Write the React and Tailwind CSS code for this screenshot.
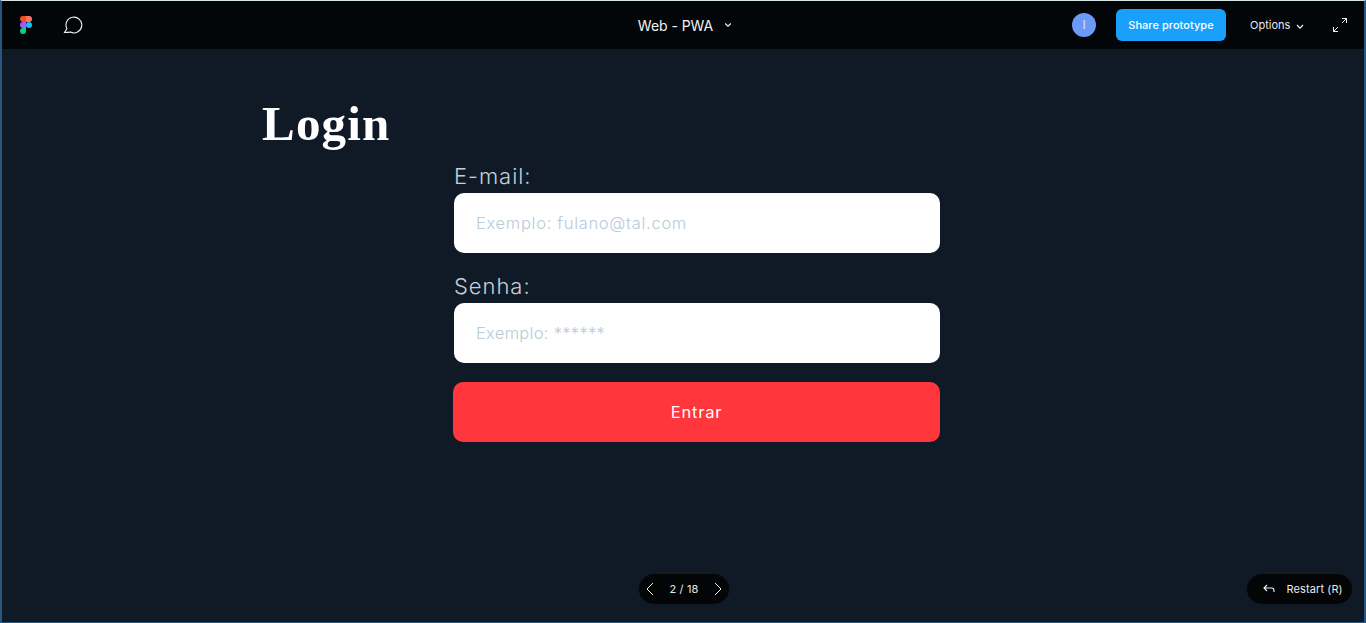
import React from "react";

function FigmaLogo() {
  return (
    <svg width="12" height="18" viewBox="0 0 12 18" className="block">
      <path d="M3 0h3v6H3a3 3 0 0 1 0-6Z" fill="#f24e1e" />
      <path d="M6 0h3a3 3 0 0 1 0 6H6Z" fill="#ff7262" />
      <path d="M3 6h3v6H3a3 3 0 0 1 0-6Z" fill="#a259ff" />
      <circle cx="9" cy="9" r="3" fill="#1abcfe" />
      <path d="M3 12h3v3a3 3 0 1 1-3-3Z" fill="#0acf83" />
    </svg>
  );
}

function Stroke({ w, h, d, sw = 1, color = "#f2f2f2" }) {
  return (
    <svg width={w} height={h} viewBox={`0 0 ${w} ${h}`} fill="none" stroke={color} strokeWidth={sw} className="block shrink-0">
      <path d={d} />
    </svg>
  );
}

function Field({ label, type, placeholder, spacing }) {
  return (
    <label className="block h-[110px]">
      <span className="block h-[34px] font-['Inter',sans-serif] text-[22px] leading-[34px] font-light tracking-[0.95px] text-[#c3d0dc]">
        {label}
      </span>
      <input
        type={type}
        placeholder={placeholder}
        className={`block h-[60px] w-[486px] rounded-[10px] bg-white px-[22px] font-['Inter',sans-serif] text-[16.5px] font-light text-[#101a26] placeholder:text-[#b9cad8] placeholder:opacity-100 ${spacing}`}
      />
    </label>
  );
}

export default function App() {
  return (
    <div className="flex h-[623px] w-[1366px] flex-col overflow-hidden border-x-2 border-t border-b border-x-[#28567e] border-t-[#d5e3e3] border-b-[#28567e] bg-[#101a26] font-['Inter',sans-serif] text-white">
      <header className="grid h-12 shrink-0 grid-cols-3 items-center bg-[#020608]">
        <div className="flex items-center gap-[31px] pl-[18px]">
          <FigmaLogo />
          <Stroke w={20} h={18} d="M1.5 16.5 3.9 12.7A7.9 7.9 0 1 1 7.4 16.1Q4.5 16.2 1.5 16.5Z" sw={1.1} />
        </div>
        <div className="flex items-center justify-center gap-[11px] pl-[4px]">
          <span className="pt-0.5 text-[14px] leading-5 tracking-[-0.05px] text-[#f2f2f2]">Web - PWA</span>
          <Stroke w={8} h={6} d="M1.2 1.5 4 4.2 6.8 1.5" sw={1.2} />
        </div>
        <div className="flex items-center justify-end pr-4">
          <span className="flex h-6 w-6 items-center justify-center rounded-full bg-[#6b9af8] text-[12px] text-[#d8e4ff]">I</span>
          <button className="ml-5 h-8 w-[110px] rounded-[6px] bg-[#18a0fb] text-[11px] font-medium tracking-[0.05px]">Share prototype</button>
          <span className="ml-6 w-[41px] text-[11px] text-[#e8e8e8]">Options</span>
          <span className="ml-[5px] mt-[3px]">
            <Stroke w={8} h={6} d="M1 1 4 4.2 7 1" sw={1.2} />
          </span>
          <span className="ml-7">
            <Stroke w={16} h={16} d="M10 1.5h4.5V6M14.5 1.5 10 6M1.5 10v4.5H6M1.5 14.5l4.5-4.5" />
          </span>
        </div>
      </header>

      <main className="flex-1">
        <h1 className="h-[110px] pt-[46px] pl-[260px] font-['Liberation_Serif',serif] text-[49px] leading-[58px] font-bold tracking-[1.2px]">Login</h1>
        <form className="ml-[451px] w-[487px]">
          <div className="pl-px">
            <Field label="E-mail:" type="text" placeholder="Exemplo: fulano@tal.com" spacing="tracking-[0.7px]" />
            <Field label="Senha:" type="text" placeholder="Exemplo: ******" spacing="tracking-[0.3px]" />
          </div>
          <button type="button" className="mt-[3px] block h-[60px] w-[487px] rounded-[10px] bg-[#ff363b] pt-px font-['Inter',sans-serif] text-[16.5px] tracking-[0.75px]">
            Entrar
          </button>
        </form>
      </main>

      <footer className="mb-[18px] grid h-[30px] shrink-0 grid-cols-3 text-[11px] text-[#e8e8e8]">
        <nav className="col-start-2 ml-[183px] flex h-[30px] w-[90px] items-center justify-between rounded-full bg-[#030507] px-[7px]">
          <Stroke w={8} h={14} d="M7 1 1 7l6 6" />
          <span className="tracking-[0.15px]">2 / 18</span>
          <Stroke w={8} h={14} d="M1 1l6 6-6 6" />
        </nav>
        <button className="mr-3 flex h-[30px] w-[105px] items-center gap-[11.5px] justify-self-end rounded-full bg-[#030507] pl-4">
          <Stroke w={12} h={10} d="M4 1 1 4l3 3M1 4h7.5a2.5 2.5 0 0 1 2.5 2.5V8" sw={1.1} />
          <span className="tracking-[0.1px] whitespace-nowrap">Restart (R)</span>
        </button>
      </footer>
    </div>
  );
}
